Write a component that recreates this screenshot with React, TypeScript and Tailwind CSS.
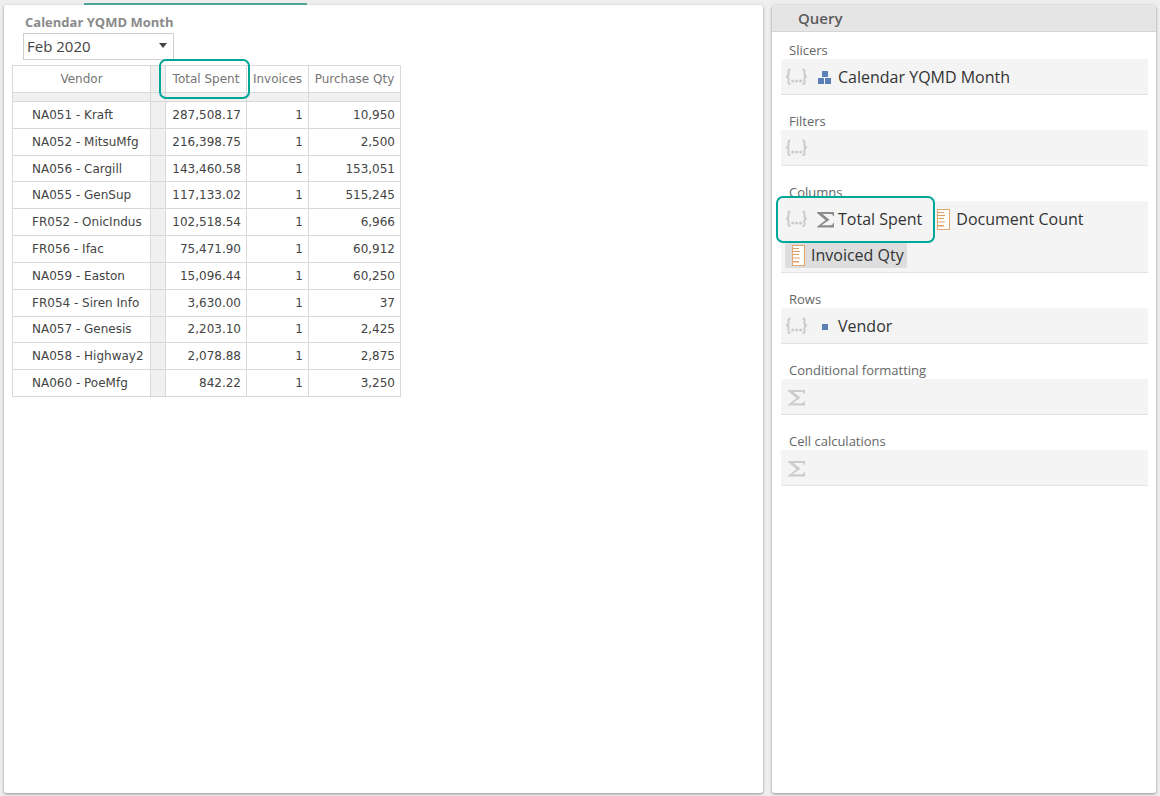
import type { ReactNode } from "react";

type VendorRow = {
  vendor: string;
  spent: string;
  invoices: number;
  qty: string;
};

const ROWS: VendorRow[] = [
  { vendor: "NA051 - Kraft", spent: "287,508.17", invoices: 1, qty: "10,950" },
  { vendor: "NA052 - MitsuMfg", spent: "216,398.75", invoices: 1, qty: "2,500" },
  { vendor: "NA056 - Cargill", spent: "143,460.58", invoices: 1, qty: "153,051" },
  { vendor: "NA055 - GenSup", spent: "117,133.02", invoices: 1, qty: "515,245" },
  { vendor: "FR052 - OnicIndus", spent: "102,518.54", invoices: 1, qty: "6,966" },
  { vendor: "FR056 - Ifac", spent: "75,471.90", invoices: 1, qty: "60,912" },
  { vendor: "NA059 - Easton", spent: "15,096.44", invoices: 1, qty: "60,250" },
  { vendor: "FR054 - Siren Info", spent: "3,630.00", invoices: 1, qty: "37" },
  { vendor: "NA057 - Genesis", spent: "2,203.10", invoices: 1, qty: "2,425" },
  { vendor: "NA058 - Highway2", spent: "2,078.88", invoices: 1, qty: "2,875" },
  { vendor: "NA060 - PoeMfg", spent: "842.22", invoices: 1, qty: "3,250" },
];

export default function App() {
  return (
    <div className="relative flex h-screen gap-[9px] bg-[#eeeeee] pt-[5px] pr-1 pb-[3px] pl-1 font-['Open_Sans',sans-serif]">
      <div className="absolute top-[3px] left-[84px] h-[2px] w-[223px] bg-[#4fa295]" />
      <ResultPanel />
      <QueryPanel />
    </div>
  );
}

function ResultPanel() {
  return (
    <main className="min-w-0 flex-1 rounded-[3px] bg-white px-2 pt-[7px] shadow-[0_1px_3px_rgba(0,0,0,0.4)]">
      <div className="ml-[11px] flex w-[151px] flex-col">
        <label
          htmlFor="month"
          className="pl-[2px] text-[13px] leading-[21px] font-bold whitespace-nowrap text-[#8a8a8a]"
        >
          Calendar YQMD Month
        </label>
        <div className="relative">
          <select
            id="month"
            defaultValue="Feb 2020"
            className="block h-[27px] w-full appearance-none border border-[#cfcfcf] bg-white pl-[3px] text-[15px] text-[#444444]"
          >
            <option>Jan 2020</option>
            <option>Feb 2020</option>
            <option>Mar 2020</option>
          </select>
          <svg
            viewBox="0 0 8 5"
            className="pointer-events-none absolute top-[10px] right-[7px] h-[5px] w-2"
            aria-hidden="true"
          >
            <path d="M0 0h8L4 5z" fill="#444444" />
          </svg>
        </div>
      </div>
      <VendorTable />
    </main>
  );
}

function VendorTable() {
  return (
    <table className="mt-[5px] h-[332px] w-[388px] table-fixed border-collapse font-['DejaVu_Sans',sans-serif] text-[12px] leading-4 text-[#444444] [&_td]:border [&_td]:border-[#d9d9d9] [&_th]:border [&_th]:border-[#d9d9d9]">
      <colgroup>
        <col className="w-[138px]" />
        <col className="w-[15px]" />
        <col className="w-[81px]" />
        <col className="w-[62px]" />
        <col className="w-[92px]" />
      </colgroup>
      <thead className="text-[#757575]">
        <tr className="h-[27px]">
          <th className="font-normal">Vendor</th>
          <td className="bg-[#f0f0f0]" />
          <th className="relative font-normal whitespace-nowrap">
            Total Spent
            <Highlight className="-top-[7px] -right-1 -bottom-[7px] -left-[7px]" />
          </th>
          <th className="font-normal whitespace-nowrap">Invoices</th>
          <th className="font-normal whitespace-nowrap">Purchase Qty</th>
        </tr>
        <tr className="h-[9px] bg-[#f0f0f0]">
          <td />
          <td />
          <td />
          <td />
          <td />
        </tr>
      </thead>
      <tbody>
        {ROWS.map((row) => (
          <tr key={row.vendor}>
            <td className="pl-[19px] whitespace-nowrap">{row.vendor}</td>
            <td className="bg-[#f0f0f0]" />
            <td className="pr-[5px] text-right">{row.spent}</td>
            <td className="pr-[5px] text-right">{row.invoices}</td>
            <td className="pr-[5px] text-right">{row.qty}</td>
          </tr>
        ))}
      </tbody>
    </table>
  );
}

function QueryPanel() {
  return (
    <aside className="w-96 shrink-0 rounded-[3px] bg-white shadow-[0_1px_3px_rgba(0,0,0,0.4)]">
      <h2 className="h-[27px] rounded-t-[3px] border-b border-[#d6d6d6] bg-[#e5e5e5] pl-[26px] text-[15px] leading-[26px] font-semibold text-[#5c5c5c]">
        Query
      </h2>
      <div className="flex flex-col gap-[17px] pt-[9px] pr-2 pl-[9px]">
        <Section title="Slicers">
          <SetButton />
          <Item icon={<HierarchyIcon />} label="Calendar YQMD Month" />
        </Section>
        <Section title="Filters">
          <SetButton />
        </Section>
        <Section title="Columns">
          <div className="relative flex items-center">
            <Highlight className="-top-[5px] -right-[13px] -bottom-[6px] -left-[9px] bg-[#f4f4f4]" />
            <SetButton />
            <Item icon={<SigmaIcon className="text-[#8c8c8c]" />} label="Total Spent" />
          </div>
          <MeasureItem label="Document Count" />
          <MeasureItem label="Invoiced Qty" selected />
        </Section>
        <Section title="Rows">
          <SetButton />
          <Item icon={<LevelIcon />} label="Vendor" />
        </Section>
        <Section title="Conditional formatting">
          <FormulaButton label="Add conditional formatting" />
        </Section>
        <Section title="Cell calculations">
          <FormulaButton label="Add cell calculation" />
        </Section>
      </div>
    </aside>
  );
}

function Section({ title, children }: { title: string; children: ReactNode }) {
  return (
    <section>
      <h3 className="pl-2 text-[13px] leading-[18px] text-[#666666]">{title}</h3>
      <div className="flex flex-wrap rounded-t-[2px] bg-[#f4f4f4] pl-1 shadow-[inset_0_-1px_0_#e2e2e2]">
        {children}
      </div>
    </section>
  );
}

function Item({ icon, label }: { icon: ReactNode; label: string }) {
  return (
    <button
      type="button"
      className="relative z-20 flex h-9 items-center gap-1 pl-[9px] text-[16px] whitespace-nowrap text-[#333333]"
    >
      {icon}
      {label}
    </button>
  );
}

function MeasureItem({ label, selected }: { label: string; selected?: boolean }) {
  return (
    <div className={selected ? "flex h-9 w-full items-center" : "ml-2 flex h-9 items-center"}>
      <button
        type="button"
        className={`flex h-[25px] items-center gap-[6px] rounded-[2px] pr-[3px] pl-[7px] text-[16px] whitespace-nowrap text-[#333333] ${
          selected ? "bg-[#dddddd]" : ""
        }`}
      >
        <MeasureIcon />
        {label}
      </button>
    </div>
  );
}

function Highlight({ className }: { className: string }) {
  return (
    <span
      className={`pointer-events-none absolute z-10 rounded-[7px] border-2 border-[#00a698] ${className}`}
    />
  );
}

function SetButton() {
  return (
    <button
      type="button"
      aria-label="Edit set"
      className="relative z-20 flex h-9 items-center text-[#cccccc]"
    >
      <svg viewBox="0 0 23 18" className="h-[18px] w-[23px]" fill="none" stroke="currentColor">
        <path
          d="M5.5 1.5H5Q3.5 1.5 3.5 3V6.5Q3.5 8.5 1 8.5Q3.5 8.5 3.5 10.5V14.5Q3.5 16 5 16H5.5"
          strokeWidth="2"
        />
        <path
          d="M17.5 1.5H18Q19.5 1.5 19.5 3V6.5Q19.5 8.5 22 8.5Q19.5 8.5 19.5 10.5V14.5Q19.5 16 18 16H17.5"
          strokeWidth="2"
        />
        <g fill="currentColor" stroke="none">
          <circle cx="7.7" cy="13" r="1.6" />
          <circle cx="11.7" cy="13" r="1.6" />
          <circle cx="15.7" cy="13" r="1.6" />
        </g>
      </svg>
    </button>
  );
}

function FormulaButton({ label }: { label: string }) {
  return (
    <button type="button" aria-label={label} className="flex h-9 items-center pl-[3px]">
      <SigmaIcon className="text-[#cccccc]" />
    </button>
  );
}

function SigmaIcon({ className }: { className: string }) {
  return (
    <svg viewBox="0 0 17 17" className={`h-[17px] w-[17px] ${className}`} aria-hidden="true">
      <path
        d="M0 1H17V5H16.2Q15.7 3 13.5 3H5.5L12.5 8.8L4.5 14.2H13.5Q15.7 14.2 16.2 12H17V16.5H0V15.7L8.5 9.2L0 2Z"
        fill="currentColor"
      />
    </svg>
  );
}

function HierarchyIcon() {
  return (
    <svg viewBox="0 0 17 17" className="h-[17px] w-[17px]" fill="#5b80b8" aria-hidden="true">
      <rect x="5" y="2" width="6" height="6" />
      <rect x="1" y="9" width="6" height="6" />
      <rect x="8" y="9" width="6" height="6" />
    </svg>
  );
}

function LevelIcon() {
  return (
    <svg viewBox="0 0 17 17" className="h-[17px] w-[17px]" fill="#5b80b8" aria-hidden="true">
      <rect x="5" y="6" width="6" height="6" />
    </svg>
  );
}

function MeasureIcon() {
  return (
    <svg viewBox="0 0 13 21" className="h-[21px] w-[13px]" aria-hidden="true">
      <rect x="0.5" y="0.5" width="12" height="20" fill="#ffffff" stroke="#e3a76e" />
      <path d="M1 3.5H7M1 6.5H8M1 9.5H7M1 16.5H7" stroke="#e0a063" />
      <path d="M1 12.5H8M1 13.5H8M1 17.5H7" stroke="#f0d3b6" />
    </svg>
  );
}
